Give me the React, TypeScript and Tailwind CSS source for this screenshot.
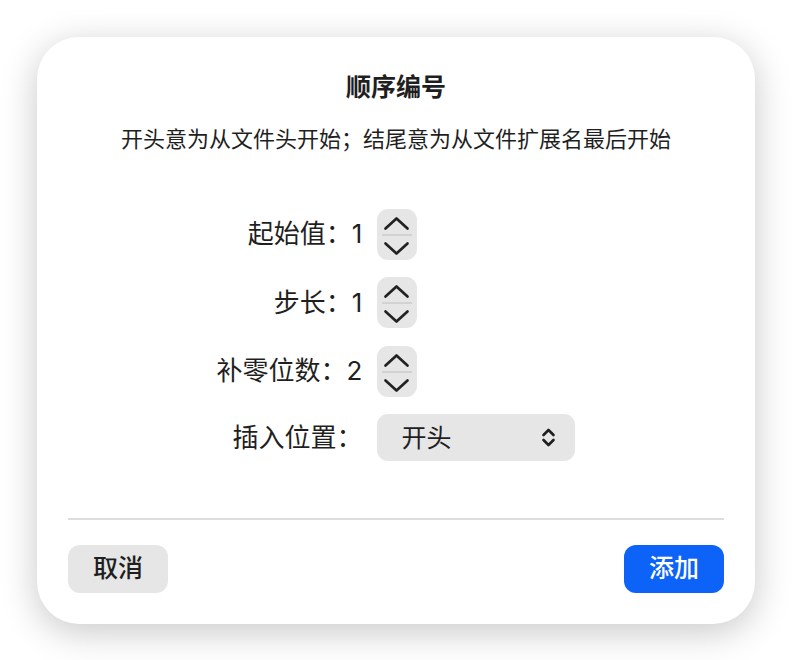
import React from "react";

const FONT = {
  fontFamily:
    '"Inter", "Noto Sans CJK SC", "Noto Sans", sans-serif',
};

function Stepper() {
  return (
    <div className="relative h-[51px] w-[40px] rounded-[11px] bg-[#e6e6e6]">
      <svg
        width="40"
        height="51"
        viewBox="0 0 40 51"
        className="absolute left-0 top-0"
        fill="none"
      >
        <path
          d="M8.5 19.5 L19.5 9.5 L30.5 19.5"
          stroke="#222222"
          strokeWidth="2.7"
          strokeLinecap="round"
          strokeLinejoin="round"
        />
        <line x1="5" y1="26" x2="35" y2="26" stroke="#cbcbcb" strokeWidth="1.5" />
        <path
          d="M8.5 34.5 L19.5 44.5 L30.5 34.5"
          stroke="#222222"
          strokeWidth="2.7"
          strokeLinecap="round"
          strokeLinejoin="round"
        />
      </svg>
    </div>
  );
}

function Label({ children }: { children: React.ReactNode }) {
  return (
    <div className="justify-self-end whitespace-nowrap text-[26px] leading-[34px] text-[#1f1f1f]">
      {children}
    </div>
  );
}

export default function App() {
  return (
    <div
      className="flex h-[660px] w-[792px] items-center justify-center bg-white"
      style={FONT}
    >
      <div className="flex h-[587px] w-[718px] flex-col rounded-[42px] bg-white px-[31px] pt-[33px] shadow-[0_8px_36px_rgba(0,0,0,0.22)]">
        <div className="text-center text-[25px] font-bold leading-[34px] text-[#1f1f1f]">
          顺序编号
        </div>
        <div className="mt-[20px] text-center text-[22px] leading-[30px] text-[#1f1f1f]">
          开头意为从文件头开始；结尾意为从文件扩展名最后开始
        </div>

        <div className="mt-[55px] grid grid-cols-[auto_auto] items-center justify-center gap-x-[15px] gap-y-[17.5px]">
          <Label>起始值：1</Label>
          <Stepper />
          <Label>步长：1</Label>
          <Stepper />
          <Label>补零位数：2</Label>
          <Stepper />
          <Label>插入位置：</Label>
          <div className="flex h-[47px] w-[198px] items-center justify-between rounded-[11px] bg-[#e6e6e6] pl-[24px] pr-[19px]">
            <span className="text-[25px] leading-[34px] text-[#1f1f1f]">开头</span>
            <svg width="15" height="21" viewBox="0 0 15 21" fill="none">
              <path
                d="M2.5 8 L7.5 3 L12.5 8"
                stroke="#1f1f1f"
                strokeWidth="2.6"
                strokeLinecap="round"
                strokeLinejoin="round"
              />
              <path
                d="M2.5 13 L7.5 18 L12.5 13"
                stroke="#1f1f1f"
                strokeWidth="2.6"
                strokeLinecap="round"
                strokeLinejoin="round"
              />
            </svg>
          </div>
        </div>

        <div className="mt-[57px] h-[1.5px] bg-[#dddddd]" />

        <div className="mt-[25px] flex items-center justify-between">
          <button className="flex h-[48px] w-[100px] items-center justify-center rounded-[12px] bg-[#e6e6e6] text-[25px] font-medium leading-none text-[#1f1f1f]">
            取消
          </button>
          <button className="flex h-[48px] w-[100px] items-center justify-center rounded-[12px] bg-[#0d62f7] text-[25px] font-medium leading-none text-white">
            添加
          </button>
        </div>
      </div>
    </div>
  );
}
